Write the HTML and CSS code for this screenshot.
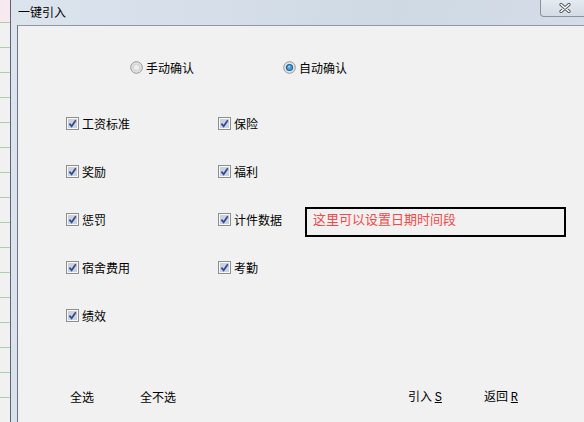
FILE: index.html
```html
<!DOCTYPE html>
<html lang="zh-CN">
<head>
  <meta charset="UTF-8" />
  <title>一键引入</title>
  <link rel="stylesheet" href="styles.css">
</head>
<body>
  <div class="desk"></div>

  <div class="window">
    <!-- 标题栏 -->
    <div class="titlebar">
      <span class="title">一键引入</span>
      <button class="close" type="button">
        <svg width="12" height="10" viewBox="0 0 12 10">
          <path d="M2 1.5 L10 8.5 M10 1.5 L2 8.5" stroke="#4a4f57" stroke-width="3.2" stroke-linecap="round"/>
          <path d="M2 1.5 L10 8.5 M10 1.5 L2 8.5" stroke="#ffffff" stroke-width="1.6" stroke-linecap="round"/>
        </svg>
      </button>
    </div>

    <div class="frame">
      <div class="panel">
        <!-- 确认方式 -->
        <div class="choice">
          <label class="radio">
            <svg width="13" height="13" viewBox="0 0 13 13">
              <circle cx="6.5" cy="6.5" r="5.8" fill="#e4e4e4" stroke="#979797"/>
              <circle cx="6.5" cy="6.5" r="4" fill="#d6d6d6"/>
              <circle cx="6.5" cy="6.5" r="2.5" fill="#efefef"/>
            </svg>
            手动确认
          </label>
          <label class="radio">
            <svg width="13" height="13" viewBox="0 0 13 13">
              <circle cx="6.5" cy="6.5" r="5.8" fill="#e4e4e4" stroke="#979797"/>
              <circle cx="6.5" cy="6.5" r="3.6" fill="#1d5d9a"/>
              <circle cx="6.5" cy="6.5" r="2.5" fill="#3fa0e8"/>
              <circle cx="6" cy="5.8" r="1" fill="#a6d6fa"/>
            </svg>
            自动确认
          </label>
        </div>

        <!-- 引入项目 -->
        <div class="options">
          <label class="check"><svg class="box" viewBox="0 0 13 13"><rect x="0.5" y="0.5" width="12" height="12" fill="#f6f6f6" stroke="#8e8f8f"/><rect x="2" y="2" width="9" height="9" fill="#cdd3dd"/><path d="M3.4 6.6 L5.6 9.3 L9.8 3.2" stroke="#34489a" stroke-width="1.7" fill="none"/></svg>工资标准</label>
          <label class="check"><svg class="box" viewBox="0 0 13 13"><rect x="0.5" y="0.5" width="12" height="12" fill="#f6f6f6" stroke="#8e8f8f"/><rect x="2" y="2" width="9" height="9" fill="#cdd3dd"/><path d="M3.4 6.6 L5.6 9.3 L9.8 3.2" stroke="#34489a" stroke-width="1.7" fill="none"/></svg>保险</label>
          <span></span>

          <label class="check"><svg class="box" viewBox="0 0 13 13"><rect x="0.5" y="0.5" width="12" height="12" fill="#f6f6f6" stroke="#8e8f8f"/><rect x="2" y="2" width="9" height="9" fill="#cdd3dd"/><path d="M3.4 6.6 L5.6 9.3 L9.8 3.2" stroke="#34489a" stroke-width="1.7" fill="none"/></svg>奖励</label>
          <label class="check"><svg class="box" viewBox="0 0 13 13"><rect x="0.5" y="0.5" width="12" height="12" fill="#f6f6f6" stroke="#8e8f8f"/><rect x="2" y="2" width="9" height="9" fill="#cdd3dd"/><path d="M3.4 6.6 L5.6 9.3 L9.8 3.2" stroke="#34489a" stroke-width="1.7" fill="none"/></svg>福利</label>
          <span></span>

          <label class="check"><svg class="box" viewBox="0 0 13 13"><rect x="0.5" y="0.5" width="12" height="12" fill="#f6f6f6" stroke="#8e8f8f"/><rect x="2" y="2" width="9" height="9" fill="#cdd3dd"/><path d="M3.4 6.6 L5.6 9.3 L9.8 3.2" stroke="#34489a" stroke-width="1.7" fill="none"/></svg>惩罚</label>
          <label class="check"><svg class="box" viewBox="0 0 13 13"><rect x="0.5" y="0.5" width="12" height="12" fill="#f6f6f6" stroke="#8e8f8f"/><rect x="2" y="2" width="9" height="9" fill="#cdd3dd"/><path d="M3.4 6.6 L5.6 9.3 L9.8 3.2" stroke="#34489a" stroke-width="1.7" fill="none"/></svg>计件数据</label>
          <div class="hint">这里可以设置日期时间段</div>

          <label class="check"><svg class="box" viewBox="0 0 13 13"><rect x="0.5" y="0.5" width="12" height="12" fill="#f6f6f6" stroke="#8e8f8f"/><rect x="2" y="2" width="9" height="9" fill="#cdd3dd"/><path d="M3.4 6.6 L5.6 9.3 L9.8 3.2" stroke="#34489a" stroke-width="1.7" fill="none"/></svg>宿舍费用</label>
          <label class="check"><svg class="box" viewBox="0 0 13 13"><rect x="0.5" y="0.5" width="12" height="12" fill="#f6f6f6" stroke="#8e8f8f"/><rect x="2" y="2" width="9" height="9" fill="#cdd3dd"/><path d="M3.4 6.6 L5.6 9.3 L9.8 3.2" stroke="#34489a" stroke-width="1.7" fill="none"/></svg>考勤</label>
          <span></span>

          <label class="check"><svg class="box" viewBox="0 0 13 13"><rect x="0.5" y="0.5" width="12" height="12" fill="#f6f6f6" stroke="#8e8f8f"/><rect x="2" y="2" width="9" height="9" fill="#cdd3dd"/><path d="M3.4 6.6 L5.6 9.3 L9.8 3.2" stroke="#34489a" stroke-width="1.7" fill="none"/></svg>绩效</label>
        </div>

        <!-- 底部按钮 -->
        <div class="actions">
          <button class="flat select-all" type="button">全选</button>
          <button class="flat select-none" type="button">全不选</button>
          <button class="flat do-import" type="button">引入 <u class="key">S</u></button>
          <button class="flat go-back" type="button">返回 <u class="key">R</u></button>
        </div>
      </div>
    </div>
  </div>
</body>
</html>
```

FILE: styles.css
```css
* {
  margin: 0;
  padding: 0;
  box-sizing: border-box;
}

html, body {
  width: 100%;
  height: 100%;
  overflow: hidden;
}

body {
  display: flex;
  background: #f1f1f1;
  font-family: "Noto Sans CJK SC", "Liberation Sans", sans-serif;
  font-size: 12px;
  color: #000;
}

/* 后面那个窗口露出来的一条 */
.desk {
  width: 10px;
  flex-shrink: 0;
  background:
    linear-gradient(#f6e9ef, #f6e9ef) top / 100% 22px no-repeat,
    repeating-linear-gradient(#f1f1f1 0 24px, #a9d3a6 24px 25px) 0 -2px / 100% 100%;
}

.window {
  flex: 1;
  display: flex;
  flex-direction: column;
  border-left: 1px solid #5c6571;
  background: linear-gradient(100deg, #dce4ee, #cfd9e4 60%, #d6dee8);
}

.titlebar {
  height: 25px;
  display: flex;
  align-items: flex-start;
  justify-content: space-between;
}

.title {
  margin: 4px 0 0 7px;
  font-size: 12px;
  line-height: 16px;
}

.close {
  width: 46px;
  height: 17px;
  margin-right: -2px;
  border: 1px solid #8a929d;
  border-top: none;
  border-radius: 0 0 0 4px;
  background: linear-gradient(#e4eaf1, #d3dbe5);
  display: flex;
  align-items: center;
  justify-content: center;
  padding-left: 4px;
}

.frame {
  flex: 1;
  display: flex;
  padding-left: 6px;
}

.panel {
  flex: 1;
  background: #f1f1f1;
  border-left: 1px solid #6d7580;
  border-top: 1px solid #8f98a3;
}

.choice {
  display: flex;
  margin-top: 32px;
  padding-left: 112px;
  height: 18px;
  align-items: center;
}

.radio {
  width: 153px;
  display: flex;
  align-items: center;
  gap: 3px;
}

.options {
  display: grid;
  grid-template-columns: 152px 87px 261px;
  grid-auto-rows: 48px;
  margin-top: 23px;
  padding-left: 48px;
}

.check {
  display: flex;
  align-items: center;
  gap: 3px;
}

.box {
  width: 13px;
  height: 13px;
  flex-shrink: 0;
}

.hint {
  align-self: start;
  margin-top: 12px;
  height: 30px;
  border: 2px solid #000;
  padding: 0 0 0 6px;
  color: #f24a4a;
  font-size: 13px;
  line-height: 20px;
}

.actions {
  display: flex;
  margin-top: 48px;
  padding-left: 52px;
  height: 18px;
  align-items: center;
}

.flat {
  border: none;
  background: none;
  font: inherit;
  font-size: 12px;
  color: #000;
  text-align: left;
}

.select-all { width: 70px; }
.select-none { width: 268px; }
.do-import { width: 76px; }

.key {
  font-family: "Liberation Mono", monospace;
  font-size: 12px;
}
```
